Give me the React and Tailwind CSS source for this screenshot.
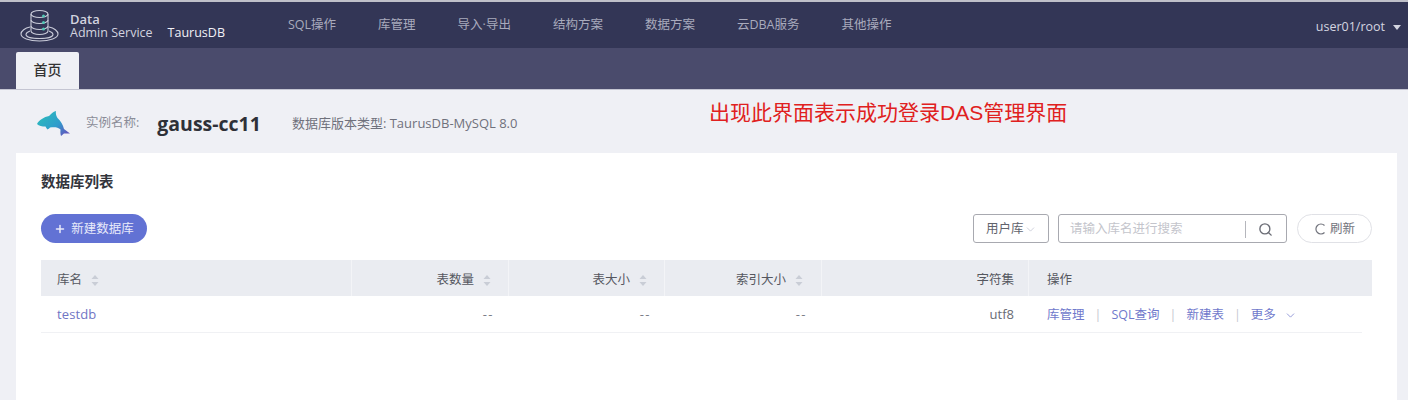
import { Search, ChevronDown, Plus } from "lucide-react"

const cjk = "font-['Open_Sans','Noto_Sans_CJK_SC',sans-serif]"

const navItems = ["SQL操作", "库管理", "导入·导出", "结构方案", "数据方案", "云DBA服务", "其他操作"]

const Logo = () => (
    <svg width="40" height="36" viewBox="0 0 40 36" fill="none" stroke="#c9cbd9" strokeWidth="1.1">
        <path d="M12 7v17c0 2 4 3.500 8.500 3.500s8.500-1.500 8.500-3.500V7" />
        <ellipse cx="20.500" cy="7" rx="8.500" ry="3.500" />
        <path d="M12 13c0 2 4 3.500 8.500 3.500S29 15 29 13M12 19c0 2 4 3.500 8.500 3.500S29 21 29 19" />
        <path d="M11 20c-5 1-9 4-9 7 0 4 8 7 18.500 7S39 31 39 27c0-3-4-6-9-7" />
        <path d="M11 24c-2 .8-4 2-4 3.500 0 2.500 6 4 13.500 4S34 30 34 27.500c0-1.500-2-2.700-4-3.500" />
        <circle cx="24.500" cy="9" r="1.500" fill="#4fc8b4" stroke="none" />
        <circle cx="24.500" cy="15.500" r="1.500" fill="#4fc8b4" stroke="none" />
        <circle cx="24.500" cy="22" r="1.500" fill="#4fc8b4" stroke="none" />
    </svg>
)

const Dolphin = () => (
    <svg width="33" height="25" viewBox="0 0 33 25" className="shrink-0">
        <defs>
            <linearGradient id="dolphin" x1="0" y1="0.2" x2="1" y2="1">
                <stop offset="0" stopColor="#2bbcbc" />
                <stop offset="0.55" stopColor="#2f9ccc" />
                <stop offset="0.85" stopColor="#5a60c0" />
                <stop offset="1" stopColor="#6a48b4" />
            </linearGradient>
        </defs>
        <path d="M0 13C2 9 7 6 12 5C14 3 16 .5 19 0C18.500 2 19 5 20.500 7C24 10 26 14 27 18L33 22.500L27 22.500L24 25C23 22 23.500 20 23.500 18.500C21 16 17 16 13 16.500C12 17.500 11.500 18 10.500 18.500C9.500 17.500 9 16.500 8.500 15.500C5 15.500 2 15 0 13Z" fill="url(#dolphin)" />
    </svg>
)

const SortIcon = () => (
    <svg width="8" height="13" viewBox="0 0 8 13" className="ml-[9px] shrink-0" fill="#c9cdd6">
        <path d="M4 1l3.500 4h-7zM4 12L.5 8h7z" />
    </svg>
)

const HeadCell = ({ label, className, sort }) => (
    <div className={`flex items-center border-r border-[#f3f4f7] last:border-r-0 h-full pt-[4px] ${className}`}>
        <span>{label}</span>
        {sort && <SortIcon />}
    </div>
)

const App = () => {
    return (
        <div className={`w-[1408px] h-[400px] overflow-hidden bg-[#eff0f5] flex flex-col text-[12.500px] ${cjk}`}>
            <div className="h-[2px] bg-[#bfc0c9]" />
            <header className="h-[46px] bg-[#333656] flex items-center pl-[19px] pr-[7px]">
                <Logo />
                <div className="ml-[11px] mt-[2px] text-[#d2d3df] leading-[14px] text-[12.500px]">
                    <div className="font-semibold text-[13px]">Data</div>
                    <div>Admin Service</div>
                </div>
                <span className="ml-[15px] mt-[16px] text-[#f1f1f6] text-[12.500px]">TaurusDB</span>
                <nav className="ml-[63px] flex gap-[42px] text-[#a9abbd] text-[12.500px]">
                    {navItems.map((item) => (
                        <span key={item}>{item}</span>
                    ))}
                </nav>
                <span className="ml-auto mt-[4px] text-[#d4d5e0] text-[12.500px]">user01/root</span>
                <span className="ml-[8px] mt-[4px] w-0 h-0 border-x-[4px] border-x-transparent border-t-[5px] border-t-[#d4d5e0]" />
            </header>
            <div className="h-[42px] bg-[#4a4b6c] border-b border-[#c4c5d2] pl-[16px] flex items-end">
                <div className="w-[63px] h-[37px] pb-[3px] bg-[#eff0f5] rounded-t-[2px] flex items-center justify-center text-[#333] text-[14px] font-medium">首页</div>
            </div>
            <div className="h-[63px] flex items-center pl-[37px] pt-[4px] relative">
                <Dolphin />
                <span className="ml-[16px] text-[#8b8d98] text-[12.500px]">实例名称:</span>
                <span className="ml-[18px] text-[#2e3038] text-[19.500px] font-bold">gauss-cc11</span>
                <span className="ml-[31px] text-[#6f717c] text-[13px]">数据库版本类型: TaurusDB-MySQL 8.0</span>
                <span className="absolute left-[709px] top-[9px] text-[#e02020] text-[21px] leading-[28px] font-['Liberation_Sans','Noto_Sans_CJK_SC',sans-serif]">出现此界面表示成功登录DAS管理界面</span>
            </div>
            <main className="ml-[16px] w-[1381px] flex-1 bg-white pl-[25px] pr-[25px] pt-[20px]">
                <h2 className="text-[14.500px] leading-[18px] font-bold text-[#33353c]">数据库列表</h2>
                <div className="mt-[23px] flex items-center h-[29px]">
                    <button className="w-[106px] h-[29px] pt-[1px] rounded-full bg-[#6272d4] text-[#e8eafa] text-[12.500px] flex items-center justify-center gap-[5px]">
                        <Plus size={12} strokeWidth={3} />
                        新建数据库
                    </button>
                    <div className="ml-auto w-[76px] h-[29px] pt-[1px] border border-[#a8a9b0] rounded-[3px] flex items-center pl-[12px] text-[#61636c] text-[12.500px]">
                        用户库
                        <ChevronDown size={13} strokeWidth={1} className="text-[#a8acc0]" />
                    </div>
                    <div className="ml-[9px] w-[229px] h-[29px] pt-[1px] border border-[#a8a9b0] rounded-[3px] flex items-center pl-[11px] text-[#c4c5cc] text-[12.500px]">
                        请输入库名进行搜索
                        <span className="ml-auto w-px h-[17px] bg-[#b5b6bc]" />
                        <Search size={15} strokeWidth={2.2} className="ml-[12px] mr-[13px] text-[#6b6d76]" />
                    </div>
                    <button className="ml-[10px] w-[75px] h-[29px] pt-[1px] border border-[#e0e1e6] rounded-full text-[#71737c] text-[12.500px] flex items-center justify-center gap-[5px]">
                        <svg width="11" height="12" viewBox="0 0 11 12" fill="none" stroke="#71737c" strokeWidth="1.2">
                            <path d="M10.500 2.500A5 5 0 1 0 10.500 9.500" />
                        </svg>
                        刷新
                    </button>
                </div>
                <div className="mt-[17px] h-[36px] bg-[#eaecf1] grid grid-cols-[311px_157px_156px_157px_207px_1fr] items-center text-[#55575f] text-[12.500px]">
                    <HeadCell label="库名" sort className="pl-[16px]" />
                    <HeadCell label="表数量" sort className="justify-end pr-[17px]" />
                    <HeadCell label="表大小" sort className="justify-end pr-[17px]" />
                    <HeadCell label="索引大小" sort className="justify-end pr-[18px]" />
                    <HeadCell label="字符集" className="justify-end pr-[14px]" />
                    <HeadCell label="操作" className="pl-[18px]" />
                </div>
                <div className="h-[37px] pt-[2px] w-[1321px] border-b border-[#f0f1f4] grid grid-cols-[311px_157px_156px_157px_207px_1fr] items-center text-[13px] text-[#7c7e88]">
                    <a className="pl-[16px] text-[#7075c4] tracking-[0.100px]">testdb</a>
                    <span className="text-right pr-[15px] tracking-[1.500px]">--</span>
                    <span className="text-right pr-[14px] tracking-[1.500px]">--</span>
                    <span className="text-right pr-[15px] tracking-[1.500px]">--</span>
                    <span className="text-right pr-[15px] text-[#696b74]">utf8</span>
                    <div className="pl-[18px] flex items-center text-[#7079cc] text-[12.500px]">
                        <span>库管理</span>
                        <span className="mx-[10px] text-[#c5c7d0]">|</span>
                        <span>SQL查询</span>
                        <span className="mx-[10px] text-[#c5c7d0]">|</span>
                        <span>新建表</span>
                        <span className="mx-[10px] text-[#c5c7d0]">|</span>
                        <span>更多</span>
                        <ChevronDown size={13} strokeWidth={1.5} className="ml-[8px] text-[#8088d0]" />
                    </div>
                </div>
            </main>
        </div>
    )
}

export default App
